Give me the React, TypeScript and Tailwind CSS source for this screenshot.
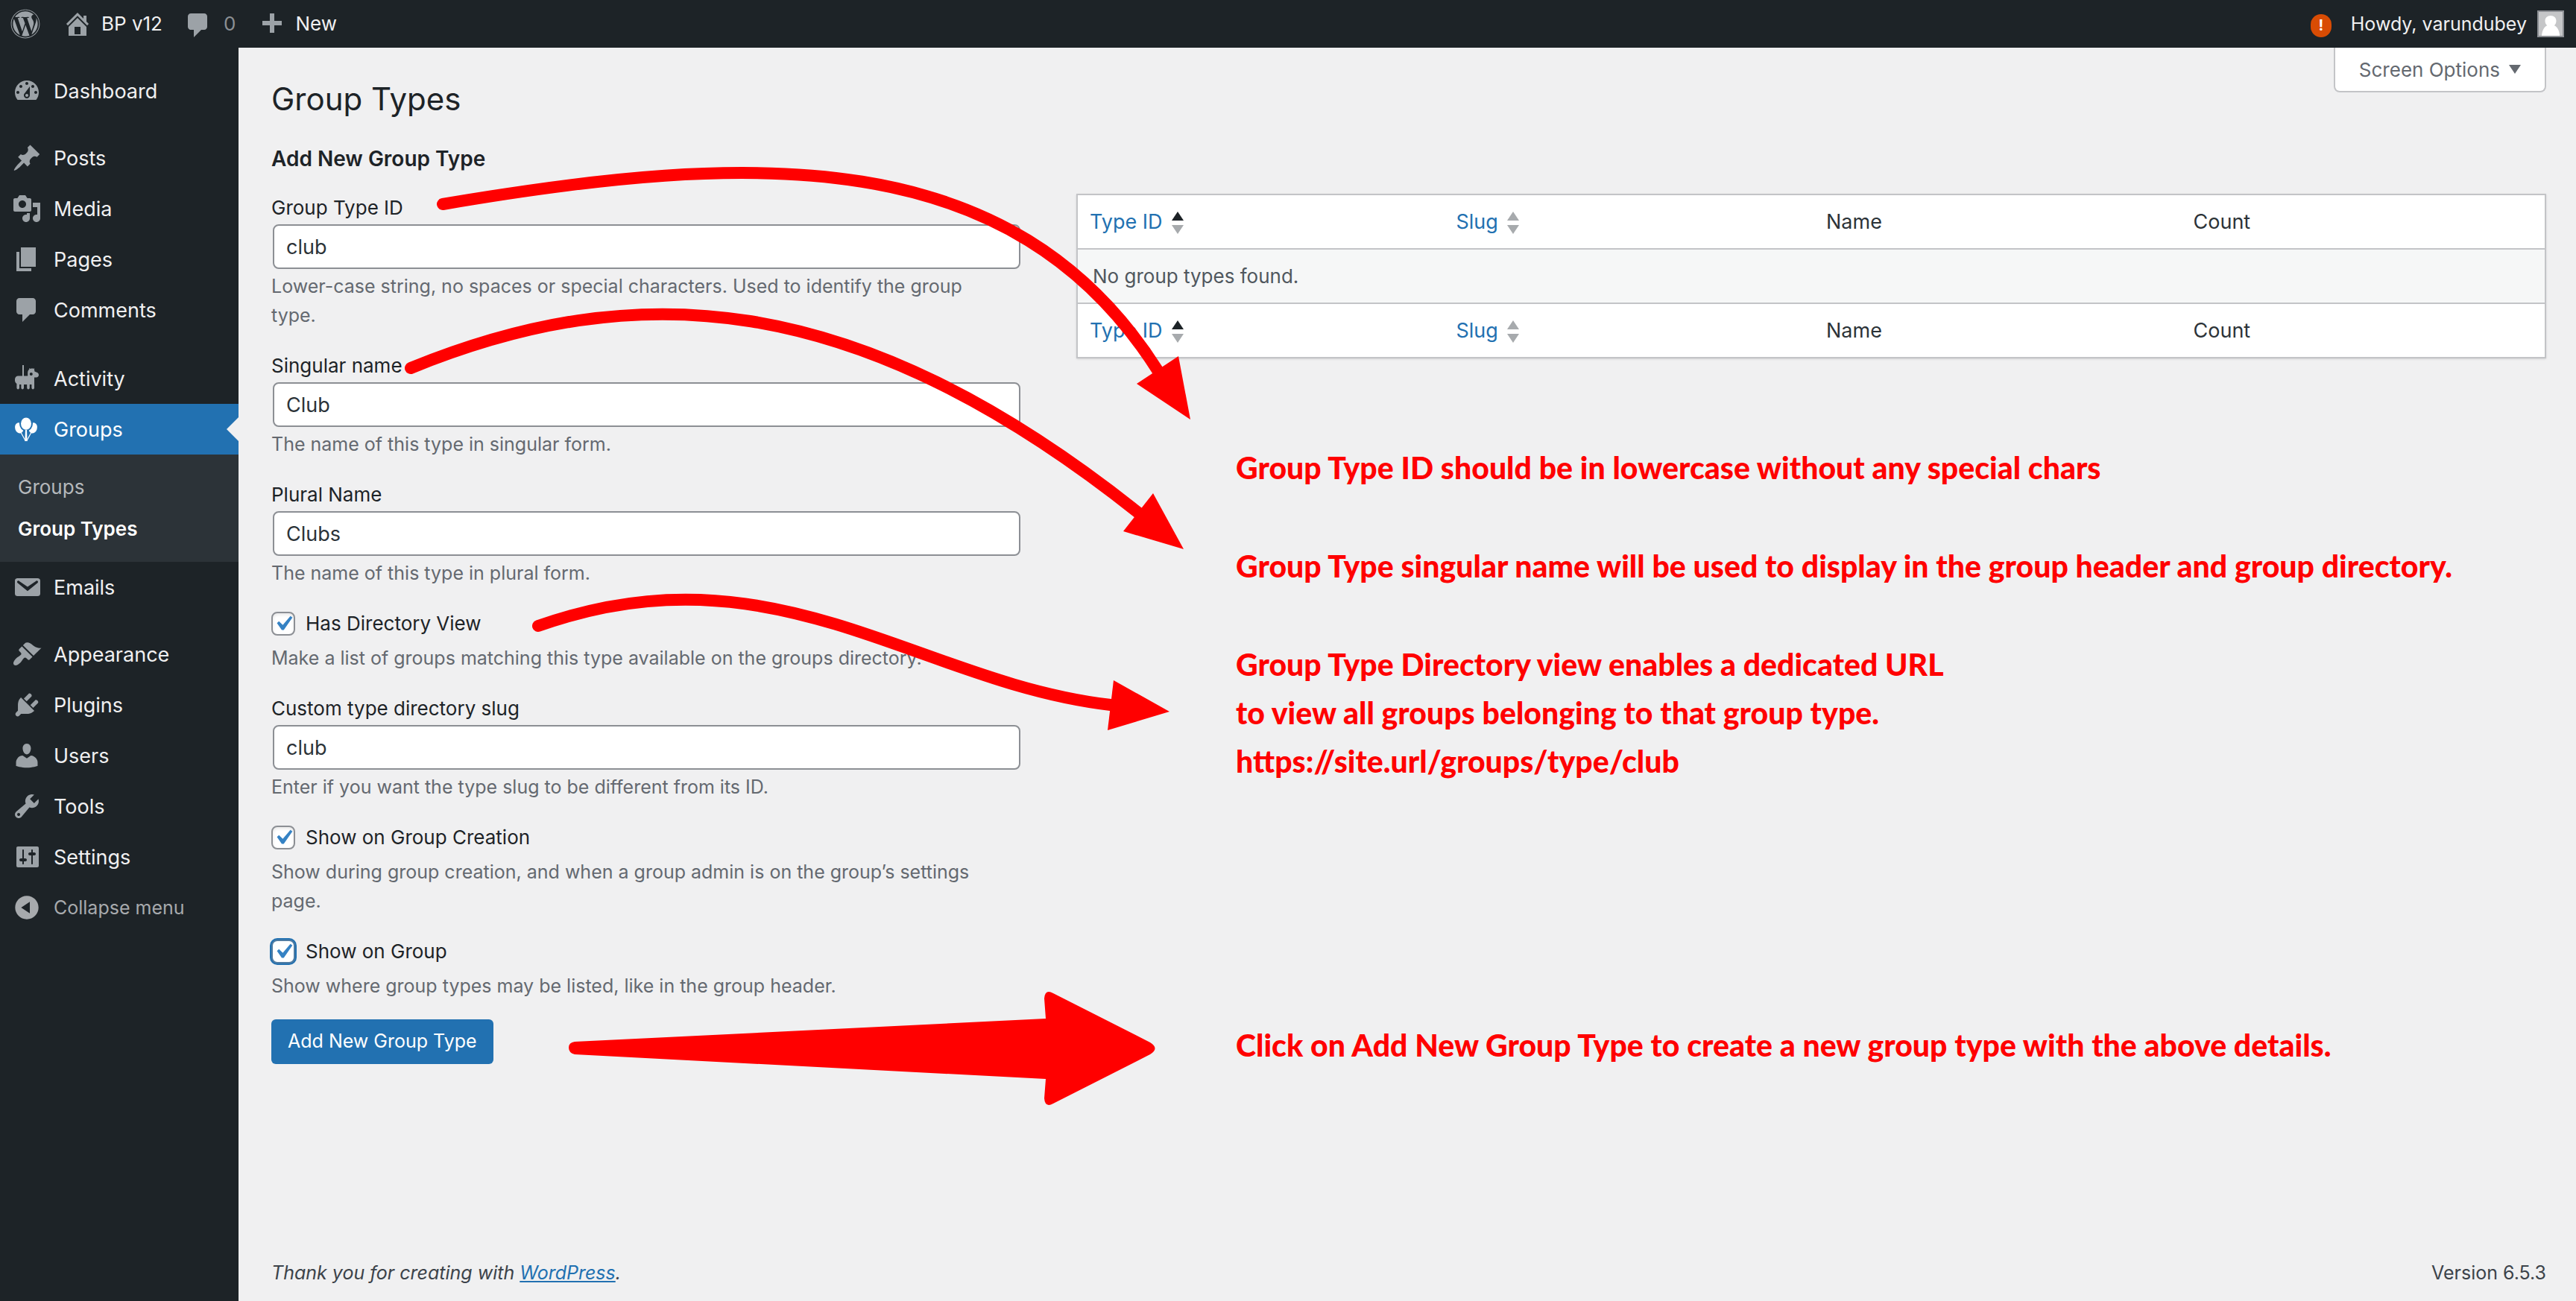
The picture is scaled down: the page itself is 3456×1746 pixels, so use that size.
import React from "react";
import { FaWordpress } from "react-icons/fa";

const ICONS = {
  dashboard:
    "M3.76 16h12.48c1.1-1.37 1.76-3.11 1.76-5 0-4.42-3.58-8-8-8s-8 3.58-8 8c0 1.89.66 3.63 1.76 5zM10 4c.55 0 1 .45 1 1s-.45 1-1 1-1-.45-1-1 .45-1 1-1zM6 6c.55 0 1 .45 1 1s-.45 1-1 1-1-.45-1-1 .45-1 1-1zm8 0c.55 0 1 .45 1 1s-.45 1-1 1-1-.45-1-1 .45-1 1-1zm-5.37 5.55L12 7v6c0 1.1-.9 2-2 2s-2-.9-2-2c0-.57.24-1.08.63-1.45zM4 10c.55 0 1 .45 1 1s-.45 1-1 1-1-.45-1-1 .45-1 1-1zm12 0c.55 0 1 .45 1 1s-.45 1-1 1-1-.45-1-1 .45-1 1-1zm-5 3c0-.55-.45-1-1-1s-1 .45-1 1 .45 1 1 1 1-.45 1-1z",
  posts:
    "M10.44 3.02l1.82-1.82 6.36 6.35-1.83 1.82c-1.05-.68-2.48-.57-3.41.36l-.75.75c-.92.93-1.04 2.35-.35 3.41l-1.83 1.82-2.41-2.41-2.8 2.79c-.42.42-3.38 2.71-3.8 2.29s1.86-3.39 2.28-3.81l2.79-2.79L4.1 9.36l1.83-1.82c1.05.69 2.48.57 3.4-.36l.75-.75c.93-.92 1.05-2.35.36-3.41z",
  media:
    "M13 11V4c0-.55-.45-1-1-1h-1.67L9 1H5L3.67 3H2c-.55 0-1 .45-1 1v7c0 .55.45 1 1 1h10c.55 0 1-.45 1-1zM7 4.5c1.38 0 2.5 1.12 2.5 2.5S8.38 9.5 7 9.5 4.5 8.38 4.5 7 5.62 4.5 7 4.5zM14 6h5v10.5c0 1.38-1.12 2.5-2.5 2.5S14 17.88 14 16.5s1.12-2.5 2.5-2.5c.17 0 .34.02.5.05V9h-3V6zm-4 8.05V13h2v3.5c0 1.38-1.12 2.5-2.5 2.5S7 17.88 7 16.5 8.12 14 9.5 14c.17 0 .34.02.5.05z",
  pages: "M6 15V2h10v13H6zm-1 1h8v2H3V5h2v11z",
  comments:
    "M5 2h9c1.1 0 2 .9 2 2v7c0 1.1-.9 2-2 2h-2l-5 5v-5H5c-1.1 0-2-.9-2-2V4c0-1.1.9-2 2-2z",
  activity:
    "M7 1h1v7.3h2.6V6c0-.9.4-1.600 1-2.100l.1-.9.9.5L13.700 3l.3.600.9-.6.3 2.200 1.800.8c.6.3 1 .9 1 1.600 0 .9-.7 1.700-1.600 1.700H15v7c0 .5-.4.9-.9.9s-.9-.4-.9-.9V14h-1.300v2.300c0 .5-.4.9-.9.9s-.9-.4-.9-.9V14H8v2.300c0 .5-.4.9-.9.9s-.9-.4-.9-.9V14H5v2.300c0 .5-.4.9-.9.9s-.9-.4-.9-.9v-2.800C2.400 13 2 12.200 2 11.300V10.500c0-1.200 1-2.200 2.200-2.200H7zM12.900 6a1 1 0 1 0 0 2 1 1 0 0 0 0-2z",
  emails:
    "M3.87 4h13.25C18.37 4 19 4.59 19 5.79v8.42c0 1.19-.63 1.79-1.88 1.79H3.87c-1.25 0-1.88-.6-1.88-1.79V5.79c0-1.2.63-1.79 1.88-1.79zm6.62 8.6l6.74-5.53c.24-.2.43-.66.13-1.07-.29-.41-.82-.42-1.17-.17l-5.7 3.86L4.8 5.83c-.35-.25-.88-.24-1.17.17-.3.41-.11.87.13 1.07z",
  appearance:
    "M14.48 11.06L7.41 3.99l1.5-1.5c.5-.56 2.3-.47 3.51.32 1.21.8 1.43 1.28 2.91 2.1 1.18.64 2.45 1.26 4.45.85zm-.71.71L6.7 4.7 4.93 6.47c-.39.39-.39 1.02 0 1.41l1.06 1.06c.39.39.39 1.03 0 1.42-.6.6-1.43 1.11-2.21 1.69-.35.26-.7.53-1.01.84C1.43 14.23.4 16.08 1.4 17.07c.99 1 2.84-.03 4.18-1.36.31-.31.58-.66.85-1.02.57-.78 1.08-1.61 1.69-2.21.39-.39 1.02-.39 1.41 0l1.06 1.06c.39.39 1.02.39 1.41 0z",
  plugins:
    "M13.11 4.36L9.87 7.6 8 5.73l3.24-3.24c.35-.34 1.05-.2 1.56.32.52.51.66 1.21.31 1.55zm-8 1.77l.91-1.12 9.01 9.01-1.19.84c-.71.71-2.63 1.16-3.82 1.16H6.14L4.9 17.26c-.59.59-1.54.59-2.12 0-.59-.58-.59-1.53 0-2.12l1.24-1.24v-3.88c0-1.13.4-3.19 1.09-3.89zm7.26 3.97l3.24-3.24c.34-.35 1.04-.21 1.55.31.52.51.66 1.21.31 1.55l-3.24 3.25z",
  users:
    "M10 9.25c-2.27 0-2.73-3.44-2.73-3.44C7 4.02 7.82 2 9.97 2c2.16 0 2.98 2.02 2.71 3.81 0 0-.41 3.44-2.68 3.44zm0 2.57L12.72 10c2.39 0 4.52 2.33 4.52 4.53v2.49s-3.65 1.13-7.24 1.13c-3.65 0-7.24-1.13-7.24-1.13v-2.49c0-2.25 1.94-4.48 4.47-4.48z",
  tools:
    "M16.68 9.77c-1.34 1.34-3.3 1.67-4.95.99l-5.41 6.52c-.99.99-2.59.99-3.58 0s-.99-2.59 0-3.57l6.52-5.42c-.68-1.65-.35-3.61.99-4.95 1.28-1.28 3.12-1.62 4.72-1.06l-2.89 2.89 2.82 2.82 2.86-2.87c.53 1.58.18 3.39-1.08 4.65zM3.81 16.21c.4.39 1.04.39 1.43 0 .4-.4.4-1.04 0-1.43-.39-.4-1.03-.4-1.43 0-.39.39-.39 1.03 0 1.43z",
  settings:
    "M18 16V4c0-.55-.45-1-1-1H4c-.55 0-1 .45-1 1v12c0 .55.45 1 1 1h13c.55 0 1-.45 1-1zM8 11h1c.55 0 1 .45 1 1s-.45 1-1 1H8v1.5c0 .28-.22.5-.5.5s-.5-.22-.5-.5V13H6c-.55 0-1-.45-1-1s.45-1 1-1h1V5.5c0-.28.22-.5.5-.5s.5.22.5.5V11zm5-2h-1c-.55 0-1-.45-1-1s.45-1 1-1h1V5.5c0-.28.22-.5.5-.5s.5.22.5.5V7h1c.55 0 1 .45 1 1s-.45 1-1 1h-1v5.5c0 .28-.22.5-.5.5s-.5-.22-.5-.5V9z",
  collapse:
    "M10 2.16c4.33 0 7.84 3.51 7.84 7.84s-3.51 7.84-7.84 7.84S2.16 14.33 2.16 10 5.71 2.16 10 2.16zm2 11.72V6.12L6.18 9.97z",
  home: "M16 8.5l1.53 1.53-1.06 1.06L10 4.6l-6.47 6.49-1.06-1.06L10 2.5l4 4v-2h2v4zm-6-2.46l6 5.99V18H4v-5.97zM12 17v-5H8v5h4z",
  plus: "M17 7v3h-5v5H9v-5H4V7h5V2h3v5h5z",
};

type IconName = keyof typeof ICONS;

function Icon({ name, className = "" }: { name: IconName; className?: string }) {
  return (
    <svg viewBox="0 0 20 20" aria-hidden="true" className={`size-10 shrink-0 ${className}`}>
      <path d={ICONS[name]} fill="currentColor" fillRule="evenodd" />
    </svg>
  );
}

function BalloonsIcon() {
  return (
    <svg viewBox="0 0 20 20" aria-hidden="true" className="size-10 shrink-0" fill="#fff">
      <ellipse cx="4.900" cy="9.200" rx="2.800" ry="3.600" transform="rotate(-18 4.900 9.200)" />
      <ellipse cx="14.100" cy="9.200" rx="2.800" ry="3.600" transform="rotate(18 14.100 9.200)" />
      <ellipse cx="9.500" cy="6.300" rx="4" ry="4.600" stroke="#2271b1" />
      <path d="M9 10.500h1l.3 7.500H8.700z" />
      <path d="M6.200 12.500l3 5.500M12.800 12.500l-3 5.500" fill="none" stroke="#fff" strokeWidth=".6" />
    </svg>
  );
}

function AdminBar() {
  return (
    <header className="flex h-16 items-center bg-[#1d2327] text-[26px] leading-none text-[#f0f0f1]">
      <a href="#about" aria-label="About WordPress" className="ml-[14px] text-[#9ca2a7]">
        <FaWordpress className="size-10" />
      </a>
      <a href="#site" className="ml-[30px] flex items-center gap-[12px]">
        <Icon name="home" className="text-[#9ca2a7]" />
        BP v12
      </a>
      <a href="#comments" className="ml-7 flex items-center gap-[14px] text-[#8c9094]">
        <Icon name="comments" className="mt-1 text-[#9ca2a7]" />0
      </a>
      <a href="#new" className="ml-7 flex items-center gap-[12px]">
        <Icon name="plus" className="mt-1 text-[#9ca2a7]" />
        New
      </a>
      <div className="ml-auto flex items-center pr-4 text-[25px]">
        <span className="mr-[26px] mt-1 flex h-[31px] w-7 items-center justify-center rounded-[14px] bg-[#d94c04] text-[20px] font-bold text-white">
          !
        </span>
        <a href="#profile" className="flex items-center gap-[14px]">
          Howdy, varundubey
          <svg viewBox="0 0 36 36" aria-hidden="true" className="size-9">
            <rect width="36" height="36" fill="#8c8f94" />
            <rect x="2" y="2" width="32" height="32" fill="#c5c6c8" />
            <path
              d="M18 7c4.500 0 7.500 3.200 7.500 7 0 2.800-1.200 4.800-2.600 6.300 4.300 2 6.600 6.500 7.300 13.700H6c.7-7.200 3-11.700 7.300-13.700C11.700 18.800 10.500 16.800 10.500 14c0-3.800 3-7 7.500-7z"
              fill="#fff"
            />
          </svg>
        </a>
      </div>
    </header>
  );
}

function MenuItem({ icon, label }: { icon: IconName; label: string }) {
  return (
    <li>
      <a href={`#${icon}`} className="flex h-[68px] items-center gap-4 pl-4">
        <Icon name={icon} className="text-[#9ca2a7]" />
        {label}
      </a>
    </li>
  );
}

function Sidebar() {
  return (
    <nav className="w-80 shrink-0 bg-[#1d2327] pt-6 text-[27px] leading-none text-[#f0f0f1]">
      <ul>
        <MenuItem icon="dashboard" label="Dashboard" />
      </ul>
      <ul className="mt-[22px]">
        <MenuItem icon="posts" label="Posts" />
        <MenuItem icon="media" label="Media" />
        <MenuItem icon="pages" label="Pages" />
        <MenuItem icon="comments" label="Comments" />
      </ul>
      <ul className="mt-6">
        <MenuItem icon="activity" label="Activity" />
        <li>
          <a
            href="#groups"
            className="relative flex h-[68px] items-center gap-4 bg-[#2271b1] pl-4 text-white"
          >
            <BalloonsIcon />
            Groups
            <span className="absolute right-0 top-1/2 -mt-4 border-y-16 border-r-16 border-y-transparent border-r-[#f0f0f1]" />
          </a>
          <ul className="flex h-36 flex-col gap-7 bg-[#2c3338] pl-6 pt-[30px] text-[26px] leading-7">
            <li>
              <a href="#all-groups" className="text-[#b4b8bb]">
                Groups
              </a>
            </li>
            <li>
              <a href="#group-types" aria-current="page" className="font-semibold text-white">
                Group Types
              </a>
            </li>
          </ul>
        </li>
        <MenuItem icon="emails" label="Emails" />
      </ul>
      <ul className="mt-[22px]">
        <MenuItem icon="appearance" label="Appearance" />
        <MenuItem icon="plugins" label="Plugins" />
        <MenuItem icon="users" label="Users" />
        <MenuItem icon="tools" label="Tools" />
        <MenuItem icon="settings" label="Settings" />
      </ul>
      <button type="button" className="flex h-[68px] items-center gap-4 pl-4 text-[25px] text-[#a7aaad]">
        <Icon name="collapse" />
        Collapse menu
      </button>
    </nav>
  );
}

function TextField({ id, label, value, help }: { id: string; label: string; value: string; help: string }) {
  return (
    <div>
      <label htmlFor={id} className="block leading-10 text-[#1d2327]">
        {label}
      </label>
      <input
        id={id}
        type="text"
        defaultValue={value}
        className="mx-0.5 mt-0.5 block h-[60px] w-[1003px] rounded-lg border-2 border-[#8c8f94] bg-white px-4 text-[27px] text-[#2c3338]"
      />
      <p className="mt-1 w-[980px] text-[25px] leading-[39px] text-[#646970]">{help}</p>
    </div>
  );
}

function CheckField({ id, label, help, focused }: { id: string; label: string; help: string; focused?: boolean }) {
  return (
    <div>
      <div className="flex items-center gap-[14px]">
        <span className="relative flex size-8">
          <input
            id={id}
            type="checkbox"
            defaultChecked
            className={`size-8 appearance-none rounded-lg border-2 bg-white ${
              focused ? "border-[#4f7ca3] ring-2 ring-[#2271b1]" : "border-[#8c8f94] shadow-[inset_0_2px_4px_rgba(0,0,0,0.1)]"
            }`}
          />
          <svg viewBox="0 0 20 20" aria-hidden="true" className="pointer-events-none absolute -left-1 -top-1 size-10">
            <path d="M14.830 4.890l1.340.940-5.810 8.380H9.020L5.780 9.670l1.340-1.250 2.570 2.400z" fill="#3582c4" />
          </svg>
        </span>
        <label htmlFor={id} className="leading-10 text-[#1d2327]">
          {label}
        </label>
      </div>
      <p className="mt-[7px] w-[980px] text-[25px] leading-[39px] text-[#646970]">{help}</p>
    </div>
  );
}

function SortHeading({ label, active }: { label: string; active?: boolean }) {
  return (
    <a href={`#sort-${label}`} className="flex items-center gap-3 text-[#2271b1]">
      {label}
      <svg viewBox="0 0 16 30" aria-hidden="true" className="h-[30px] w-4">
        <path d="M8 0l8 12H0z" fill={active ? "#1d2327" : "#a7aaad"} />
        <path d="M8 30L0 18h16z" fill="#a7aaad" />
      </svg>
    </a>
  );
}

function HeadingRow() {
  return (
    <tr className="h-[73px] text-[27px] text-[#2c3338]">
      <th scope="col" className="w-1/4 px-4 pt-0.5 text-left font-normal">
        <SortHeading label="Type ID" active />
      </th>
      <th scope="col" className="w-1/4 px-4 pt-0.5 text-left font-normal">
        <SortHeading label="Slug" />
      </th>
      <th scope="col" className="w-1/4 px-5 pt-0.5 text-left font-normal">
        Name
      </th>
      <th scope="col" className="w-1/4 px-5 pt-0.5 text-left font-normal">
        Count
      </th>
    </tr>
  );
}

function TypesTable() {
  return (
    <table className="w-full table-fixed border-collapse border-2 border-[#c3c4c7] bg-white shadow-sm">
      <thead>
        <HeadingRow />
      </thead>
      <tbody>
        <tr className="h-[73px] border-y-2 border-[#c3c4c7] bg-[#f6f7f7]">
          <td colSpan={4} className="px-5 text-[#50575e]">
            No group types found.
          </td>
        </tr>
      </tbody>
      <tfoot>
        <HeadingRow />
      </tfoot>
    </table>
  );
}

function Arrows() {
  return (
    <svg
      viewBox="0 0 1280 1440"
      aria-hidden="true"
      className="pointer-events-none absolute left-0 top-0 h-[1440px] w-[1280px]"
    >
      <g transform="translate(-320 -64)">
        <g fill="none" stroke="#ff0000" strokeWidth="16" strokeLinecap="round">
          <path d="M594 274C1010 203 1358 190 1553 497" />
          <path d="M551 494C850 372 1145 384 1527 688" />
          <path d="M722 840C1040 728 1230 916 1490 946" />
        </g>
        <g fill="#ff0000">
          <path d="M1581 478L1597 563L1525 515z" />
          <path d="M1547 662L1588 737L1507 713z" />
          <path d="M1494 913L1569 955L1486 980z" />
          <path d="M771 1398L1403 1367L1401 1340Q1402 1327 1413 1333L1543 1399Q1556 1407 1543 1415L1413 1481Q1402 1487 1401 1474L1403 1448L771 1415Q763 1413 763 1406Q763 1399 771 1398z" />
        </g>
      </g>
    </svg>
  );
}

export default function App() {
  return (
    <div className="flex min-h-screen flex-col bg-[#f0f0f1] font-['Inter',sans-serif] text-[26px] text-[#3c434a]">
      <AdminBar />
      <div className="flex flex-1">
        <Sidebar />
        <main className="relative flex flex-1 flex-col pl-11 pr-10">
          <div className="flex items-start justify-between">
            <h1 className="pt-10 text-[42px] leading-[58px] text-[#1d2327]">Group Types</h1>
            <button
              type="button"
              className="flex h-[60px] items-center gap-3 rounded-b-lg border-2 border-t-0 border-[#c3c4c7] bg-white px-8 text-[#646970]"
            >
              Screen Options
              <svg viewBox="0 0 16 12" aria-hidden="true" className="h-3 w-4">
                <path d="M0 0h16L8 12z" fill="currentColor" />
              </svg>
            </button>
          </div>
          <div className="flex flex-1 items-start">
            <form className="mt-[31px] w-[1080px] shrink-0">
              <h2 className="mb-[26px] text-[28px] leading-10 font-semibold text-[#1d2327]">Add New Group Type</h2>
              <div className="flex flex-col gap-7">
                <TextField
                  id="type-id"
                  label="Group Type ID"
                  value="club"
                  help="Lower-case string, no spaces or special characters. Used to identify the group type."
                />
                <TextField
                  id="singular"
                  label="Singular name"
                  value="Club"
                  help="The name of this type in singular form."
                />
                <TextField id="plural" label="Plural Name" value="Clubs" help="The name of this type in plural form." />
                <CheckField
                  id="directory"
                  label="Has Directory View"
                  help="Make a list of groups matching this type available on the groups directory."
                />
                <TextField
                  id="slug"
                  label="Custom type directory slug"
                  value="club"
                  help="Enter if you want the type slug to be different from its ID."
                />
                <CheckField
                  id="creation"
                  label="Show on Group Creation"
                  help="Show during group creation, and when a group admin is on the group’s settings page."
                />
                <CheckField
                  id="show"
                  label="Show on Group"
                  help="Show where group types may be listed, like in the group header."
                  focused
                />
              </div>
              <button type="button" className="mt-[25px] h-[60px] rounded-md bg-[#2271b1] px-[22px] text-[25px] text-white">
                Add New Group Type
              </button>
            </form>
            <section className="mt-[98px] flex-1">
              <TypesTable />
              <div className="pl-[214px] font-['Lato',sans-serif] text-[41px] leading-[65px] font-black text-[#ff0000]">
                <p className="mt-[114px]">Group Type ID should be in lowercase without any special chars</p>
                <p className="mt-[67px]">
                  Group Type singular name will be used to display in the group header and group directory.
                </p>
                <p className="mt-[67px]">
                  Group Type Directory view enables a dedicated URL
                  <br />
                  to view all groups belonging to that group type.
                  <br />
                  https://site.url/groups/type/club
                </p>
                <p className="mt-[316px]">
                  Click on Add New Group Type to create a new group type with the above details.
                </p>
              </div>
            </section>
          </div>
          <footer className="flex justify-between pb-[18px] text-[25px] leading-10">
            <p className="italic">
              Thank you for creating with{" "}
              <a href="#wordpress" className="text-[#2271b1] underline">
                WordPress
              </a>
              .
            </p>
            <p>Version 6.5.3</p>
          </footer>
          <Arrows />
        </main>
      </div>
    </div>
  );
}
